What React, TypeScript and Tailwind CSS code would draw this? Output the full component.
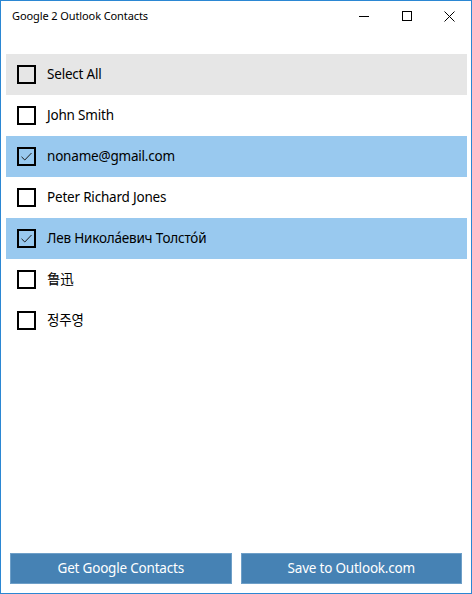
import React, { useState } from "react";

const font = { fontFamily: '"Segoe UI", "Noto Sans", "Noto Sans CJK SC", "Noto Sans CJK KR", sans-serif' };

type Contact = { name: string; checked: boolean; lang?: string };

const initial: Contact[] = [
  { name: "John Smith", checked: false },
  { name: "noname@gmail.com", checked: true },
  { name: "Peter Richard Jones", checked: false },
  { name: "Лев Никола́евич Толсто́й", checked: true },
  { name: "鲁迅", checked: false, lang: "zh" },
  { name: "정주영", checked: false, lang: "ko" },
];

function Box({ checked }: { checked: boolean }) {
  return (
    <span className="flex h-[19px] w-[19px] shrink-0 items-center justify-center border-2 border-[#000]">
      {checked && (
        <svg width="13" height="13" viewBox="0 0 13 13" fill="none">
          <path d="M1.5 6.8 L4.8 10 L11.5 3" stroke="#1a1a1a" strokeWidth="1" />
        </svg>
      )}
    </span>
  );
}

export default function App() {
  const [items, setItems] = useState(initial);
  const all = items.every((c) => c.checked);

  return (
    <div style={font} className="flex h-[594px] w-[472px] flex-col border border-[#2b87d3] bg-white text-[#000]">
      <div className="flex h-[30px] shrink-0 items-center">
        <span className="flex-1 pl-[11px] text-[11px] tracking-[-0.1px]">Google 2 Outlook Contacts</span>
        <button className="flex h-[30px] w-[43px] items-center justify-center">
          <svg width="10" height="10" viewBox="0 0 10 10"><path d="M0 5.5 H10" stroke="#000" strokeWidth="1" /></svg>
        </button>
        <button className="flex h-[30px] w-[43px] items-center justify-center">
          <svg width="10" height="10" viewBox="0 0 10 10" fill="none"><rect x="0.5" y="0.5" width="9" height="9" stroke="#000" /></svg>
        </button>
        <button className="flex h-[30px] w-[43px] items-center justify-center">
          <svg width="11" height="11" viewBox="0 0 11 11"><path d="M0.5 0.5 L10.5 10.5 M10.5 0.5 L0.5 10.5" stroke="#000" strokeWidth="1" /></svg>
        </button>
      </div>

      <div className="mt-[23px] flex flex-1 flex-col pl-[5px] pr-[4px]">
        <button
          onClick={() => setItems(items.map((c) => ({ ...c, checked: !all })))}
          className="flex h-[41px] items-center gap-[11px] bg-[#e6e6e6] pl-[11px] text-left text-[13.5px] tracking-[-0.2px]"
        >
          <Box checked={all} />
          Select All
        </button>
        {items.map((c, i) => (
          <button
            key={c.name}
            lang={c.lang}
            onClick={() => setItems(items.map((x, j) => (j === i ? { ...x, checked: !x.checked } : x)))}
            className={`flex h-[41px] items-center gap-[11px] pl-[11px] text-left text-[13.5px] tracking-[-0.2px] ${c.checked ? "bg-[#99c9ef]" : ""}`}
          >
            <Box checked={c.checked} />
            {c.name}
          </button>
        ))}
      </div>

      <div className="flex gap-[9px] px-[9px] pb-[9px]">
        <button className="h-[31px] flex-1 border border-[#6e9fc8] bg-[#4682b4] text-[13.5px] tracking-[-0.2px] text-white">
          Get Google Contacts
        </button>
        <button className="h-[31px] flex-1 border border-[#6e9fc8] bg-[#4682b4] text-[13.5px] tracking-[-0.2px] text-white">
          Save to Outlook.com
        </button>
      </div>
    </div>
  );
}
